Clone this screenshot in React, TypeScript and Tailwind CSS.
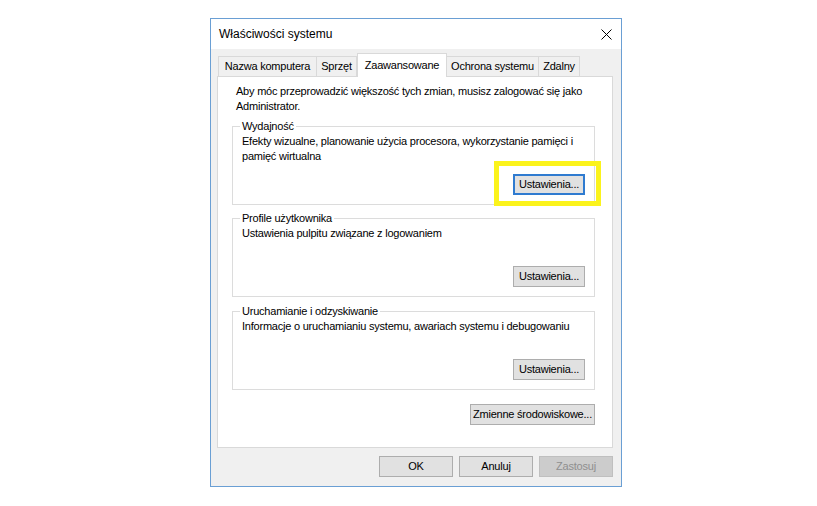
import React from 'react';

const Btn = ({ label, focused, disabled, className = '' }: { label: string; focused?: boolean; disabled?: boolean; className?: string }) => {
  let look = 'bg-[#e1e1e1] border border-[#adadad] text-black';
  if (focused) look = 'bg-[#e1e1e1] border-2 border-[#2f7bd0] text-black';
  if (disabled) look = 'bg-[#cccccc] border border-[#bfbfbf] text-[#8f8f8f]';
  return (
    <div className={`h-[21px] flex items-center justify-center leading-none whitespace-nowrap ${look} ${className}`}>
      {label}
    </div>
  );
};

const Group = ({ title, text, focused, className = '', children }: { title: string; text: React.ReactNode; focused?: boolean; className?: string; children?: React.ReactNode }) => (
  <div className={`relative h-[79px] border border-[#dcdcdc] flex flex-col ${className}`}>
    <span className="-mt-[8px] ml-[7px] self-start px-[2px] bg-white leading-[15px]">{title}</span>
    <p className="pl-[9px] leading-[15px] whitespace-nowrap">{text}</p>
    <Btn label="Ustawienia..." focused={focused} className="mt-auto self-end mr-[9px] mb-[9px] w-[72px]" />
    {children}
  </div>
);

const tabs = [
  { name: 'Nazwa komputera', w: 'w-[99px]' },
  { name: 'Sprzęt', w: 'w-[41px]' },
  { name: 'Zaawansowane', w: 'w-[90px]', active: true },
  { name: 'Ochrona systemu', w: 'w-[93px]' },
  { name: 'Zdalny', w: 'w-[42px]' },
];

export default function App() {
  return (
    <div className="w-[817px] h-[506px] bg-white pl-[210px] pt-[18px] text-[11px] tracking-[-0.22px] text-black" style={{ fontFamily: '"Liberation Sans", Arial, sans-serif' }}>
      <div className="w-[412px] h-[469px] border border-[#6a9fd4] flex flex-col">
        {/* title bar */}
        <div className="h-[30px] bg-white flex items-center justify-between pl-[8px] pr-[9px]">
          <span className="text-[12px] tracking-normal">Właściwości systemu</span>
          <svg width="11" height="11" viewBox="0 0 11 11">
            <path d="M0.5 0.5 L10.5 10.5 M10.5 0.5 L0.5 10.5" stroke="#000" strokeWidth="1" />
          </svg>
        </div>

        <div className="flex-1 bg-[#f0f0f0] pl-[6px] pr-[8px] pt-[4px] flex flex-col">
          {/* tabs */}
          <div className="flex items-end h-[23px] pl-[1px] relative z-10">
            {tabs.map((t) =>
              t.active ? (
                <div key={t.name} className={`${t.w} h-[24px] -mb-[1px] bg-white border border-b-0 border-[#d9d9d9] flex items-center justify-center pb-[1px]`}>
                  {t.name}
                </div>
              ) : (
                <div key={t.name} className={`${t.w} h-[20px] bg-[#f0f0f0] border border-b-0 border-[#d9d9d9] -ml-[1px] first:ml-0 flex items-center justify-center`}>
                  {t.name}
                </div>
              )
            )}
          </div>

          {/* panel */}
          <div className="h-[372px] bg-white border border-[#d9d9d9] pt-[7px] pl-[14px]">
            <div className="w-[363px] flex flex-col">
              <p className="pl-[4px] leading-[15px] whitespace-nowrap">
                Aby móc przeprowadzić większość tych zmian, musisz zalogować się jako
                <br />
                Administrator.
              </p>

              <Group
                title="Wydajność"
                focused
                className="mt-[12px] h-[78px]"
                text={<>Efekty wizualne, planowanie użycia procesora, wykorzystanie pamięci i<br />pamięć wirtualna</>}
              >
                <div className="absolute left-[261px] top-[34px] w-[107px] h-[45px] border-[5px] border-[#fbf31c]" />
              </Group>

              <Group title="Profile użytkownika" className="mt-[13px]" text="Ustawienia pulpitu związane z logowaniem" />

              <Group
                title="Uruchamianie i odzyskiwanie"
                className="mt-[14px]"
                text="Informacje o uruchamianiu systemu, awariach systemu i debugowaniu"
              />

              <Btn label="Zmienne środowiskowe..." className="mt-[14px] self-end w-[125px]" />
            </div>
          </div>

          {/* dialog buttons */}
          <div className="flex justify-end gap-[6px] mt-[8px]">
            <Btn label="OK" className="w-[74px]" />
            <Btn label="Anuluj" className="w-[74px]" />
            <Btn label="Zastosuj" disabled className="w-[74px]" />
          </div>
        </div>
      </div>
    </div>
  );
}
